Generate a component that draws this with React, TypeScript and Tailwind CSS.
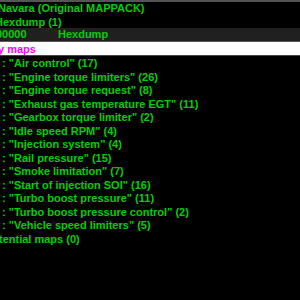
const items = [
  { name: "Air control", count: 17 },
  { name: "Engine torque limiters", count: 26 },
  { name: "Engine torque request", count: 8 },
  { name: "Exhaust gas temperature EGT", count: 11 },
  { name: "Gearbox torque limiter", count: 2 },
  { name: "Idle speed RPM", count: 4 },
  { name: "Injection system", count: 4 },
  { name: "Rail pressure", count: 15 },
  { name: "Smoke limitation", count: 7 },
  { name: "Start of injection SOI", count: 16 },
  { name: "Turbo boost pressure", count: 11 },
  { name: "Turbo boost pressure control", count: 2 },
  { name: "Vehicle speed limiters", count: 5 },
];

export default function App() {
  return (
    <div
      className="w-[300px] h-[300px] bg-black overflow-hidden font-bold text-[11px] text-[#00d000] whitespace-nowrap"
      style={{ fontFamily: '"Liberation Sans", sans-serif' }}
    >
      <div className="h-[2px] bg-[#555555]" />
      <div className="h-[13px] leading-[13px] -ml-[2px]">Navara (Original MAPPACK)</div>
      <div className="h-[13px] leading-[14px] -ml-[5px]">Hexdump (1)</div>
      {/* address bar */}
      <div className="h-[13px] leading-[13px] bg-[#202020] flex">
        <span className="w-[58px] -ml-[4px]">00000</span>
        <span className="ml-[4px]">Hexdump</span>
      </div>
      <div className="h-[1px] bg-[#555555]" />
      <div className="h-[13px] leading-[14px] bg-white text-[#ff00ff] border-b border-[#444444] box-content -ml-[2px]">
        y maps
      </div>
      <div className="pt-[1px]">
        {items.map((it) => (
          <div key={it.name} className="h-[13.5px] leading-[13.5px] pl-[2px]">
            : "{it.name}" ({it.count})
          </div>
        ))}
        <div className="h-[13.5px] leading-[13.5px] -ml-[1px]">tential maps (0)</div>
      </div>
    </div>
  );
}
